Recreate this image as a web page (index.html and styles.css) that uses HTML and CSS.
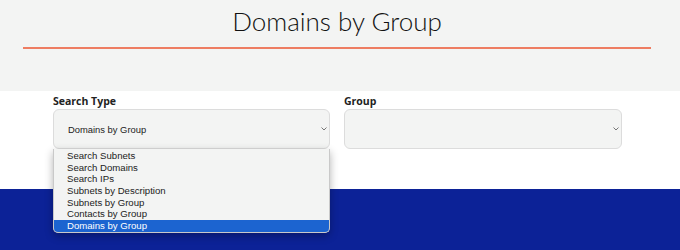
FILE: index.html
```html
<html>

<head>
  <link rel="stylesheet" href="styles.css">
</head>

<body>
  <div class="page-header">
    <div class="header-inner">
      <h1 class="page-title">Domains by Group</h1>
    </div>
  </div>

  <div class="search-form">
    <div class="field">
      <label class="field-label">Search Type</label>
      <div class="select-box">
        <span class="select-value">Domains by Group</span>
        <svg class="chevron" width="6" height="4" viewBox="0 0 6 4"><path d="M0.5 0.5 L3 3 L5.5 0.5" fill="none" stroke="#777" stroke-width="1"/></svg>
      </div>
      <ul class="dropdown">
        <li>Search Subnets</li>
        <li>Search Domains</li>
        <li>Search IPs</li>
        <li>Subnets by Description</li>
        <li>Subnets by Group</li>
        <li>Contacts by Group</li>
        <li class="selected">Domains by Group</li>
      </ul>
    </div>
    <div class="field">
      <label class="field-label">Group</label>
      <div class="select-box">
        <span class="select-value"></span>
        <svg class="chevron" width="6" height="4" viewBox="0 0 6 4"><path d="M0.5 0.5 L3 3 L5.5 0.5" fill="none" stroke="#777" stroke-width="1"/></svg>
      </div>
    </div>
  </div>

  <div class="page-footer"></div>
</body>

</html>
```

FILE: styles.css
```css
body {
  margin: 0;
  background-color: #fff;
  font-family: "Open Sans", sans-serif;
}

.page-header {
  height: 91px;
  background-color: #f3f4f3;
  padding: 0 29px 0 23px;
}

.header-inner {
  border-bottom: 2px solid #ee7d62;
  padding-top: 5px;
  height: 42px;
}

.page-title {
  margin: 0;
  text-align: center;
  font-family: "Lato", sans-serif;
  font-weight: 300;
  font-size: 26px;
  line-height: 32px;
  color: #111;
}

.search-form {
  display: grid;
  grid-template-columns: 277px 278px;
  column-gap: 14px;
  padding: 2px 0 0 53px;
  height: 96px;
}

.field {
  position: relative;
}

.field-label {
  display: block;
  font-size: 10.5px;
  font-weight: 700;
  line-height: 16px;
  color: #222;
}

.select-box {
  display: flex;
  align-items: center;
  justify-content: space-between;
  box-sizing: border-box;
  height: 40px;
  padding: 0 2px 0 14px;
  background-color: #f3f4f3;
  border: 1px solid #dcdcdc;
  border-radius: 6px;
}

.select-value {
  font-family: "Liberation Sans", Arial, sans-serif;
  font-size: 9.4px;
  color: #222;
}

.dropdown {
  position: absolute;
  top: 56px;
  left: 0;
  width: 277px;
  box-sizing: border-box;
  margin: 0;
  padding: 1px 0 0;
  list-style: none;
  background-color: #f3f4f3;
  border: 1px solid #c9c9c9;
  border-top: none;
  border-radius: 0 0 5px 5px;
  box-shadow: 0 3px 8px rgba(0, 0, 0, 0.3);
  overflow: hidden;
  font-family: "Liberation Sans", Arial, sans-serif;
  font-size: 9.6px;
  color: #222;
}

.dropdown li {
  height: 11.7px;
  line-height: 11.7px;
  padding-left: 13px;
}

.dropdown .selected {
  background-color: #1c64d0;
  color: #fff;
}

.page-footer {
  height: 61px;
  background-color: #0c2297;
}
```
